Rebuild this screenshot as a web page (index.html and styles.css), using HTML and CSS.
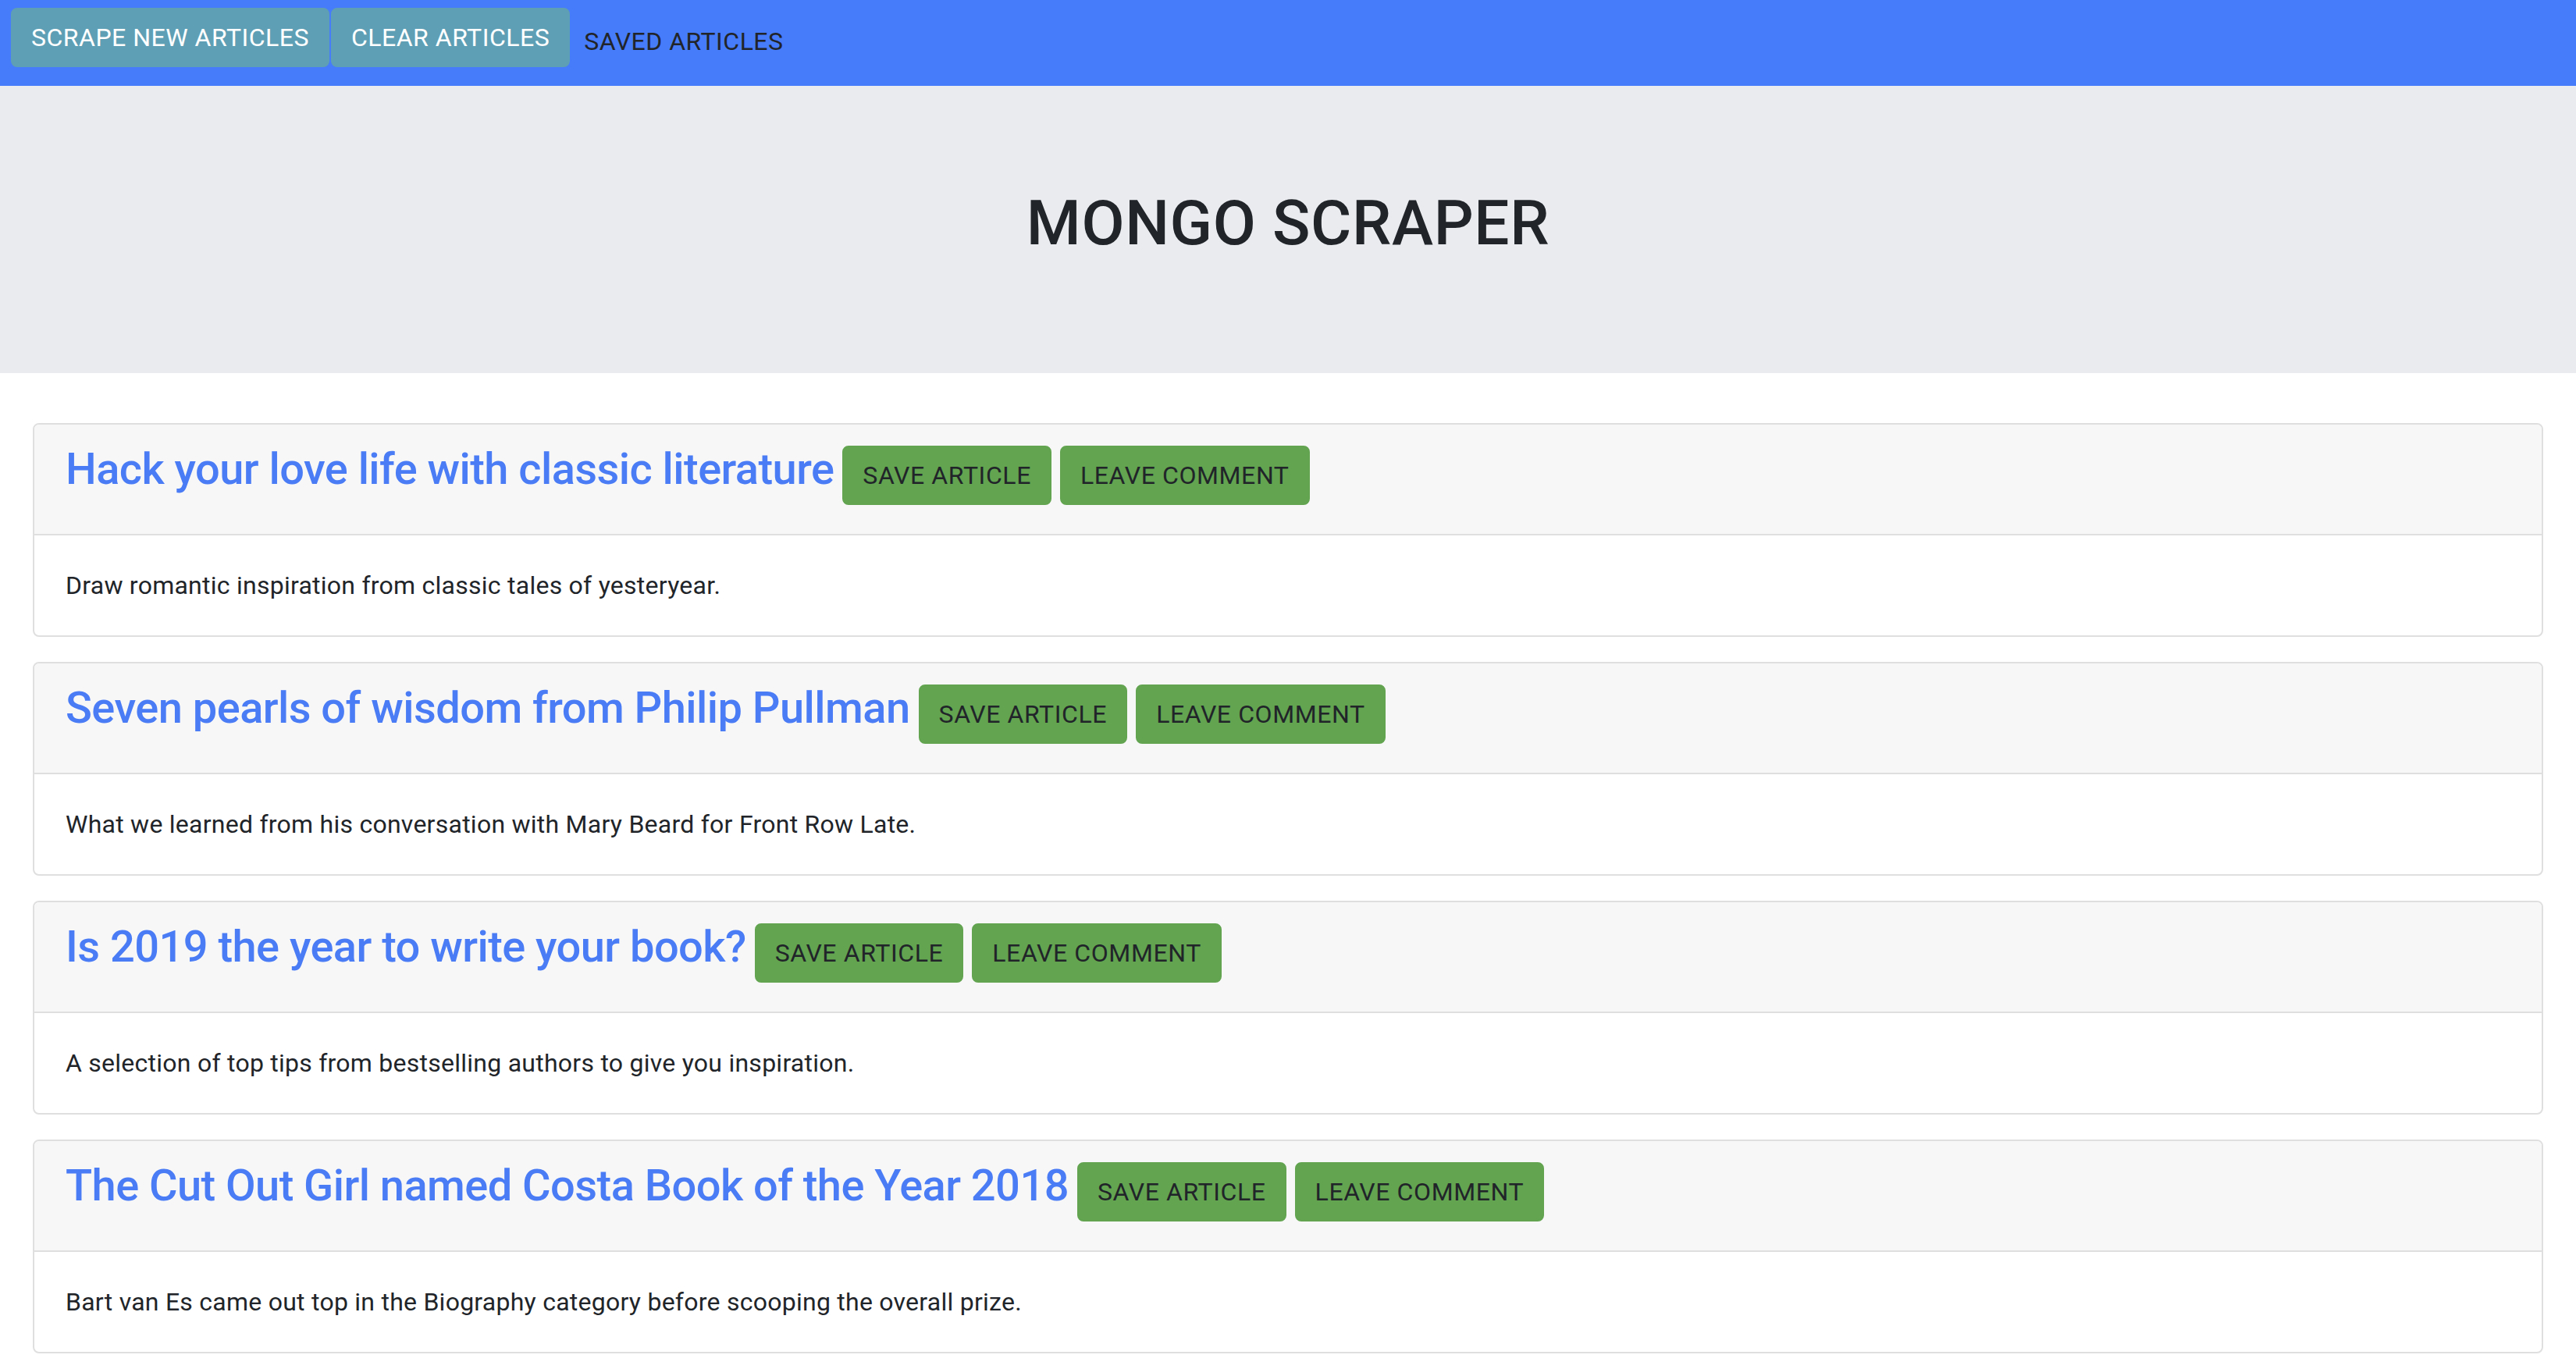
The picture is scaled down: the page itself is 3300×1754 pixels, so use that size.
FILE: index.html
```html
<!DOCTYPE html>
<html lang="en">
<head>
<meta charset="utf-8">
<title>Mongo Scraper</title>
<link rel="stylesheet" href="styles.css">
</head>
<body>
<nav class="topnav">
  <button class="nav-btn">SCRAPE NEW ARTICLES</button><button class="nav-btn nav-btn-second">CLEAR ARTICLES</button><a class="nav-link" href="#">SAVED ARTICLES</a>
</nav>
<header class="jumbotron">
  <h1 class="site-title">MONGO SCRAPER</h1>
</header>
<main class="articles">
  <section class="card">
    <div class="card-header">
      <h3 class="card-title"><a class="title-link" href="#">Hack your love life with classic literature</a><button class="act-btn">SAVE ARTICLE</button><button class="act-btn">LEAVE COMMENT</button></h3>
    </div>
    <div class="card-body"><p class="summary">Draw romantic inspiration from classic tales of yesteryear.</p></div>
  </section>
  <section class="card">
    <div class="card-header">
      <h3 class="card-title"><a class="title-link" href="#">Seven pearls of wisdom from Philip Pullman</a><button class="act-btn">SAVE ARTICLE</button><button class="act-btn">LEAVE COMMENT</button></h3>
    </div>
    <div class="card-body"><p class="summary">What we learned from his conversation with Mary Beard for Front Row Late.</p></div>
  </section>
  <section class="card">
    <div class="card-header">
      <h3 class="card-title"><a class="title-link" href="#">Is 2019 the year to write your book?</a><button class="act-btn">SAVE ARTICLE</button><button class="act-btn">LEAVE COMMENT</button></h3>
    </div>
    <div class="card-body"><p class="summary">A selection of top tips from bestselling authors to give you inspiration.</p></div>
  </section>
  <section class="card">
    <div class="card-header">
      <h3 class="card-title"><a class="title-link" href="#">The Cut Out Girl named Costa Book of the Year 2018</a><button class="act-btn">SAVE ARTICLE</button><button class="act-btn">LEAVE COMMENT</button></h3>
    </div>
    <div class="card-body"><p class="summary">Bart van Es came out top in the Biography category before scooping the overall prize.</p></div>
  </section>
</main>
</body>
</html>
```
FILE: styles.css
```css
* { box-sizing: border-box; }
body {
  margin: 0;
  font-family: Roboto, "Liberation Sans", sans-serif;
  font-size: 32px;
  line-height: 48px;
  color: #212529;
  background: #fff;
}
.topnav {
  height: 110px;
  background: #467bf9;
  padding: 10px 14px;
  display: flex;
  align-items: flex-start;
}
.nav-btn {
  font-family: inherit;
  font-size: 32px;
  line-height: 48px;
  letter-spacing: 0.5px;
  padding: 12px 24px;
  border: 2px solid #5f9fb5;
  border-radius: 8px;
  background: #5f9fb5;
  color: #fff;
  cursor: pointer;
}
.nav-btn-second { margin-left: 2px; }
.nav-link {
  margin-left: 18px;
  margin-top: 19px;
  font-size: 32px;
  line-height: 48px;
  letter-spacing: 0.5px;
  color: #212529;
  text-decoration: none;
}
.jumbotron {
  background: #e9ebef;
  padding: 128px 64px;
  margin-bottom: 64px;
  text-align: center;
}
.site-title {
  margin: 0 0 16px;
  font-size: 80px;
  line-height: 96px;
  font-weight: 500;
  letter-spacing: 0.65px;
  color: #212529;
}
.articles { padding: 0 42px; }
.card {
  border: 2px solid #dfdfdf;
  border-radius: 8px;
  margin-bottom: 32px;
  overflow: hidden;
}
.card-header {
  background: #f7f7f7;
  padding: 24px 40px;
  border-bottom: 2px solid #dfdfdf;
}
.card-title {
  margin: 0 0 13px;
  font-size: 56px;
  line-height: 1.2;
  font-weight: 500;
}
.title-link {
  color: #4a7cf6;
  text-decoration: none;
  letter-spacing: -0.55px;
}
.act-btn {
  display: inline-block;
  vertical-align: baseline;
  margin-left: 11px;
  font-family: inherit;
  font-size: 32px;
  line-height: 48px;
  font-weight: 400;
  letter-spacing: 0.6px;
  padding: 12px 24px;
  border: 2px solid #62a450;
  border-radius: 8px;
  background: #62a450;
  color: #212529;
  cursor: pointer;
}
.card-body { padding: 40px; }
.summary { margin: 0; letter-spacing: 0.25px; }
```
